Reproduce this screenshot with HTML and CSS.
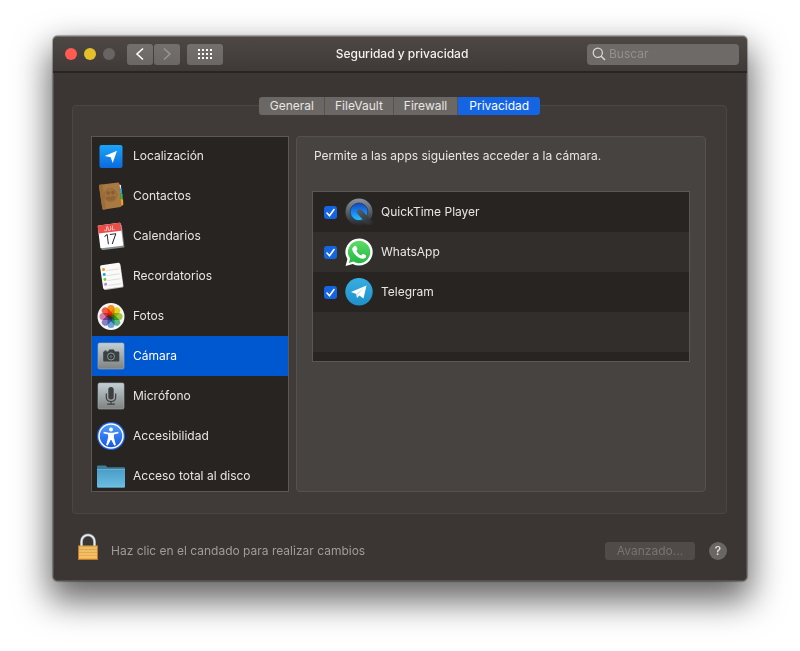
FILE: index.html
```
<!DOCTYPE html>
<html lang="es">
<head>
    <meta charset="UTF-8">
    <meta name="viewport" content="width=device-width, initial-scale=1">
    <title>Seguridad y privacidad</title>
    <link rel="stylesheet" href="styles.css">
</head>
<body>
    <main class="window">
        <header class="titlebar">
            <div class="toolbar">
                <div class="lights">
                    <button class="light close" aria-label="Cerrar"></button>
                    <button class="light minimize" aria-label="Minimizar"></button>
                    <button class="light" aria-label="Ampliar" disabled></button>
                </div>
                <div class="nav-buttons">
                    <button class="tool" aria-label="Atrás">
                        <svg width="10" height="14" viewBox="0 0 10 14"><path d="M8 1.500L2 7l6 5.500" fill="none" stroke="#fff" stroke-width="1.6"/></svg>
                    </button>
                    <button class="tool" aria-label="Adelante" disabled>
                        <svg width="10" height="14" viewBox="0 0 10 14"><path d="M2 1.500L8 7l-6 5.500" fill="none" stroke="#9b9794" stroke-width="1.4"/></svg>
                    </button>
                </div>
                <button class="tool wide" aria-label="Mostrar todo">
                    <svg width="14" height="10" viewBox="0 0 14 10"><path d="M0 1h14M0 5h14M0 9h14" stroke="#fff" stroke-width="2" stroke-dasharray="2"/></svg>
                </button>
            </div>
            <h1 class="title">Seguridad y privacidad</h1>
            <label class="search">
                <svg width="14" height="14" viewBox="0 0 14 14"><circle cx="5.8" cy="5.8" r="4.6" fill="none" stroke="#dddbda" stroke-width="1.2"/><path d="M9.2 9.2l3.8 3.8" stroke="#dddbda" stroke-width="1.4"/></svg>
                <input type="search" placeholder="Buscar" aria-label="Buscar">
            </label>
        </header>

        <div class="content">
            <div class="tabs" role="tablist">
                <button class="tab" role="tab">General</button>
                <button class="tab" role="tab">FileVault</button>
                <button class="tab" role="tab">Firewall</button>
                <button class="tab active" role="tab" aria-selected="true">Privacidad</button>
            </div>

            <section class="group">
                <nav class="sidebar">
                    <a class="item" href="#localizacion">
                        <svg class="icon" viewBox="0 0 28 28">
                            <defs><linearGradient id="loc" x2="0" y2="1"><stop offset="0" stop-color="#1ba4fb"/><stop offset="1" stop-color="#0b6bdd"/></linearGradient></defs>
                            <rect x="2.5" y="3" width="23" height="23" rx="2" fill="url(#loc)"/>
                            <path d="M20 8.700L15.700 21l-2-5.800-6-1.200z" fill="#fff"/>
                        </svg>
                        Localización
                    </a>
                    <a class="item" href="#contactos">
                        <svg class="icon" viewBox="0 0 28 28">
                            <path d="M22 2.500l2 .6.200 5-1.200.5z" fill="#e8e8e8"/>
                            <path d="M22.500 6l2.200.4.300 4.600-2 .5z" fill="#2ca7df"/>
                            <path d="M23 11l2.500.4.300 6-2.300.6z" fill="#35b45c"/>
                            <path d="M23.500 17l2.600.5.200 5.500-5 2z" fill="#f0a51c"/>
                            <path d="M2.800 2.800L21 .6q1 0 1.200 1l2.300 22.200q0 1-1 1.200L7 27.600q-1.400.2-1.700-1L2 4q0-1 .8-1.200z" fill="#a97943"/>
                            <path d="M2.800 2.800L5.500 2.500 8.800 27.300 7 27.600q-1.400.2-1.700-1L2 4q0-1 .8-1.200z" fill="#9c6d39"/>
                            <circle cx="13.500" cy="13" r="6.500" fill="#a27340" stroke="#8f6332" stroke-width=".7"/>
                            <circle cx="11.200" cy="11" r="2" fill="#8a5f30"/>
                            <circle cx="15.900" cy="10.500" r="2" fill="#8a5f30"/>
                            <path d="M8.500 16.500q2.500-4 5-.9 2-3.800 5.200 0-1.500 3-5 3-3.500.2-5.200-2.100z" fill="#8f6332"/>
                        </svg>
                        Contactos
                    </a>
                    <a class="item" href="#calendarios">
                        <svg class="icon" viewBox="0 0 28 28">
                            <g transform="rotate(-7 14 14)">
                                <rect x="3" y="4" width="23" height="23" rx="1" fill="#878f91"/>
                                <rect x="2" y="2" width="23" height="23" rx="1" fill="#fff"/>
                                <path d="M2 10V3q0-1 1-1h21q1 0 1 1v7z" fill="#eb4d49"/>
                                <text x="13.500" y="8.500" class="cal-month">JUL</text>
                                <text x="13.500" y="22" class="cal-day">17</text>
                            </g>
                        </svg>
                        Calendarios
                    </a>
                    <a class="item" href="#recordatorios">
                        <svg class="icon" viewBox="0 0 28 28">
                            <g transform="rotate(-8 14 14)">
                                <rect x="5" y="3" width="20" height="24" rx="1.500" fill="#bcbab7"/>
                                <rect x="4.500" y="2" width="20" height="24" rx="1.500" fill="#fbfaf8"/>
                                <path d="M10 8h13M10 13h13M10 18h13M10 23h13" stroke="#d5d3d1" stroke-width=".7"/>
                                <circle cx="7.500" cy="6.500" r="1.500" fill="#ff9021"/>
                                <circle cx="7.500" cy="11.500" r="1.500" fill="#1aa1f3"/>
                                <circle cx="7.500" cy="16.500" r="1.500" fill="#5fd638"/>
                                <circle cx="7.500" cy="21.500" r="1.500" fill="#c77ce4"/>
                            </g>
                        </svg>
                        Recordatorios
                    </a>
                    <a class="item" href="#fotos">
                        <svg class="icon" viewBox="0 0 28 28">
                            <circle cx="14" cy="14.500" r="13.500" fill="#f6f5f4"/>
                            <g class="petals">
                                <rect x="10.500" y="3" width="7" height="11.500" rx="3.500" fill="#ff9617"/>
                                <rect x="10.500" y="3" width="7" height="11.500" rx="3.500" fill="#eadc1e" transform="rotate(45 14 14.500)"/>
                                <rect x="10.500" y="3" width="7" height="11.500" rx="3.500" fill="#a5cf48" transform="rotate(90 14 14.500)"/>
                                <rect x="10.500" y="3" width="7" height="11.500" rx="3.500" fill="#5cc08c" transform="rotate(135 14 14.500)"/>
                                <rect x="10.500" y="3" width="7" height="11.500" rx="3.500" fill="#6cabe6" transform="rotate(180 14 14.500)"/>
                                <rect x="10.500" y="3" width="7" height="11.500" rx="3.500" fill="#9184c8" transform="rotate(225 14 14.500)"/>
                                <rect x="10.500" y="3" width="7" height="11.500" rx="3.500" fill="#d585b4" transform="rotate(270 14 14.500)"/>
                                <rect x="10.500" y="3" width="7" height="11.500" rx="3.500" fill="#f8604a" transform="rotate(315 14 14.500)"/>
                            </g>
                        </svg>
                        Fotos
                    </a>
                    <a class="item selected" href="#camara">
                        <svg class="icon" viewBox="0 0 28 28">
                            <defs><linearGradient id="metal" x2="0" y2="1"><stop offset="0" stop-color="#c2d0d5"/><stop offset="1" stop-color="#7e8180"/></linearGradient></defs>
                            <rect x="1" y="1" width="26" height="26" rx="1.500" fill="url(#metal)" stroke="#a5afb3" stroke-width=".6"/>
                            <path d="M7.500 8.500h2v1h1.500l1.300-2h4.400l1.300 2h3.500q.8 0 .8.800v8.400q0 .8-.8.800H7q-.8 0-.8-.8v-8.400q0-.8.8-.8h.5z" fill="#3b4143"/>
                            <circle cx="14" cy="14.500" r="3.500" fill="#33383a" stroke="#8c979b" stroke-width="1"/>
                            <circle cx="14" cy="14.500" r="1.500" fill="#5b6467"/>
                        </svg>
                        Cámara
                    </a>
                    <a class="item" href="#microfono">
                        <svg class="icon" viewBox="0 0 28 28">
                            <rect x="1" y="1" width="26" height="26" rx="1.500" fill="url(#metal)" stroke="#a5afb3" stroke-width=".6"/>
                            <rect x="11.300" y="5" width="5.400" height="12.500" rx="2.700" fill="#3d3f40"/>
                            <path d="M9.300 11.500V15q0 4.500 4.700 4.500t4.700-4.500v-3.500M14 19.500V22M10.200 22.200h7.600" fill="none" stroke="#3d3f40" stroke-width="1.200"/>
                        </svg>
                        Micrófono
                    </a>
                    <a class="item" href="#accesibilidad">
                        <svg class="icon" viewBox="0 0 28 28">
                            <defs><linearGradient id="acc" x2="0" y2="1"><stop offset="0" stop-color="#529ff8"/><stop offset="1" stop-color="#1454e5"/></linearGradient></defs>
                            <circle cx="14" cy="14" r="14" fill="#1e62e8"/>
                            <circle cx="14" cy="14" r="12" fill="url(#acc)" stroke="#fff" stroke-width="1.500"/>
                            <circle cx="14" cy="7.500" r="2" fill="#fff"/>
                            <path d="M6.700 9.800l5.300.9h4l5.300-.9.200 1.500-4.600 1.200v3l2 7.500-1.700.5L14.400 18h-.8l-2.800 5.500-1.700-.5 2-7.500v-3l-4.600-1.200z" fill="#fff"/>
                        </svg>
                        Accesibilidad
                    </a>
                    <a class="item" href="#disco">
                        <svg class="icon" viewBox="0 0 28 28">
                            <defs><linearGradient id="folder" x2="0" y2="1"><stop offset="0" stop-color="#4b9dc7"/><stop offset="1" stop-color="#69bee3"/></linearGradient></defs>
                            <path d="M0 6V4.500q0-1 1-1h7.500l2 1.800H27q1 0 1 1V10H0z" fill="#3c7f9d"/>
                            <path d="M0 7.500h28v17q0 1-1 1H1q-1 0-1-1z" fill="url(#folder)"/>
                            <path d="M0 7.500h28M.5 25h27" stroke="#83c7e4" stroke-width=".6"/>
                        </svg>
                        Acceso total al disco
                    </a>
                </nav>

                <div class="panel">
                    <p class="intro">Permite a las apps siguientes acceder a la cámara.</p>
                    <ul class="apps">
                        <li>
                            <label class="app">
                                <input type="checkbox" checked>
                                <svg class="icon" viewBox="0 0 28 28">
                                    <defs>
                                        <linearGradient id="qt-ring" x2="0" y2="1"><stop offset="0" stop-color="#8993a0"/><stop offset="1" stop-color="#25282c"/></linearGradient>
                                        <linearGradient id="qt-lens" x2="0" y2="1"><stop offset="0" stop-color="#1547bd"/><stop offset=".5" stop-color="#1683f3"/><stop offset="1" stop-color="#23c5fc"/></linearGradient>
                                        <linearGradient id="qt-tail" x2="1" y2="1"><stop offset="0" stop-color="#596067"/><stop offset="1" stop-color="#25282b"/></linearGradient>
                                    </defs>
                                    <circle cx="14" cy="14" r="13.500" fill="url(#qt-ring)"/>
                                    <circle cx="14" cy="13.800" r="8.800" fill="url(#qt-lens)" stroke="#273a59" stroke-width=".8"/>
                                    <path d="M12 15q-1-2.500 1.500-3.500 2-.5 3.500.8L28 24.500 27.500 27l-5.500-.3z" fill="url(#qt-tail)"/>
                                </svg>
                                QuickTime Player
                            </label>
                        </li>
                        <li>
                            <label class="app">
                                <input type="checkbox" checked>
                                <svg class="icon" viewBox="0 0 28 28">
                                    <defs><linearGradient id="wa" x2="0" y2="1"><stop offset="0" stop-color="#5fdb67"/><stop offset="1" stop-color="#23b844"/></linearGradient></defs>
                                    <path d="M14 .5a13.500 13.500 0 1 1-6.200 25.400L.6 27.900l1.800-7A13.500 13.500 0 0 1 14 .5z" fill="#fff"/>
                                    <path d="M14 2.800a11.200 11.200 0 1 1-5.700 20.800l-4.400 1.300 1.300-4.300A11.200 11.200 0 0 1 14 2.800z" fill="url(#wa)"/>
                                    <path d="M9.300 8.200q.8-.8 1.700-.1l1.500 3q0 .7-1.200 2 1.500 3 4.800 4.400l1.700-1.600q.5-.3 3.300 1.500.4 3-3.400 3.400-3.500-.2-7.400-4-3.700-4-3-6.400.6-1.500 2-2.200z" fill="#fff"/>
                                </svg>
                                WhatsApp
                            </label>
                        </li>
                        <li>
                            <label class="app">
                                <input type="checkbox" checked>
                                <svg class="icon" viewBox="0 0 28 28">
                                    <defs><linearGradient id="tg" x2="0" y2="1"><stop offset="0" stop-color="#37aee2"/><stop offset="1" stop-color="#1e90ca"/></linearGradient></defs>
                                    <circle cx="14" cy="13.800" r="13.700" fill="url(#tg)"/>
                                    <path d="M6 14L21.500 7.500 18.500 20.500 14.400 17.500 12 20 11.300 16z" fill="#fff"/>
                                    <path d="M11.300 16l8-6.600-6.800 7.400-.5 3.200z" fill="#c3dbea"/>
                                </svg>
                                Telegram
                            </label>
                        </li>
                    </ul>
                </div>
            </section>

            <footer class="footer">
                <button class="lock">
                    <svg width="20" height="27" viewBox="0 0 20 27">
                        <defs><linearGradient id="brass" x2="0" y2="1"><stop offset="0" stop-color="#d8a34b"/><stop offset="1" stop-color="#efb04c"/></linearGradient></defs>
                        <path d="M3.500 14V8.500a6.500 6.500 0 0 1 13 0V14" fill="none" stroke="#8d9295" stroke-width="3"/>
                        <path d="M3.500 14V8.500a6.500 6.500 0 0 1 13 0V14" fill="none" stroke="#e8edef" stroke-width="1.600"/>
                        <rect y="12.500" width="20" height="14.500" rx=".8" fill="url(#brass)"/>
                        <path d="M1 15h18M1 18h18M1 21h18M1 24h18" stroke="#ffd482"/>
                        <path d="M.5 12.500v14h19v-14" fill="none" stroke="#bd792b"/>
                    </svg>
                    <span>Haz clic en el candado para realizar cambios</span>
                </button>
                <button class="advanced" disabled>Avanzado...</button>
                <button class="help" aria-label="Ayuda">?</button>
            </footer>
        </div>
    </main>
</body>
</html>
```
FILE: styles.css
```
:root {
    --text-color: #e8e6e5;
    --window-color: #3b3633;
    --control-color: #6b6764;
    --list-color: #282422;
    --accent-color: #1465e3;
}

* {
    box-sizing: border-box;
}

body {
    margin: 0;
    padding: 36px 53px 70px;
    background-color: #fff;
    color: var(--text-color);
    font-family: Inter, "Liberation Sans", sans-serif;
    font-size: 12px;
    line-height: 16px;
}

button,
input {
    font: inherit;
    color: inherit;
}

button {
    padding: 0;
    border: none;
}

.window {
    border-radius: 5px;
    background-color: var(--window-color);
    box-shadow: inset 0 0 0 1px #55504d, 0 0 1px 1px rgba(0, 0, 0, 0.3), 0 16px 34px 4px rgba(0, 0, 0, 0.6);
}

.titlebar {
    display: grid;
    grid-template-columns: 1fr auto 1fr;
    align-items: center;
    height: 37px;
    padding: 0 8px 0 12px;
    border-top: 1px solid #75706d;
    border-bottom: 2px solid #292523;
    border-radius: 5px 5px 0 0;
    background: linear-gradient(#4e4845, #3f3a37);
}

.toolbar,
.lights,
.nav-buttons {
    display: flex;
    align-items: center;
}

.lights {
    gap: 7px;
    margin-right: 12px;
}

.light {
    width: 12px;
    height: 12px;
    border-radius: 50%;
    background-color: #686461;
}

.light.close {
    background-color: #ff5b52;
}

.light.minimize {
    background-color: #e6c029;
}

.nav-buttons {
    gap: 1px;
    margin-right: 7px;
}

.tool {
    display: flex;
    align-items: center;
    justify-content: center;
    width: 26px;
    height: 21px;
    border-radius: 3px;
    background: linear-gradient(#73706d, #6b6764);
}

.tool.wide {
    width: 36px;
}

.title {
    margin: 0;
    font-size: 12px;
    font-weight: 500;
    color: #f2f1f0;
}

.search {
    display: flex;
    align-items: center;
    justify-self: end;
    gap: 3px;
    width: 152px;
    height: 21px;
    padding: 0 5px;
    border-radius: 4px;
    background-color: #6e6a67;
}

.search input {
    flex: 1;
    min-width: 0;
    padding: 0;
    border: none;
    outline: none;
    background: none;
}

.search input::placeholder {
    color: #94908d;
}

.content {
    padding: 24px 20px 21px 19px;
}

.tabs {
    display: flex;
    justify-content: center;
    position: relative;
    margin-bottom: -10px;
}

.tab {
    height: 18px;
    padding: 0 10px;
    border-right: 1px solid #56524f;
    background-color: var(--control-color);
}

.tab:first-child {
    padding-left: 11px;
    border-radius: 3px 0 0 3px;
}

.tab.active {
    padding: 0 11px;
    border: none;
    border-radius: 0 3px 3px 0;
    background-color: var(--accent-color);
    color: #fff;
}

.group {
    display: flex;
    gap: 7px;
    padding: 30px 20px 21px 18px;
    border: 1px solid #4b4643;
    border-radius: 4px;
    background-color: #403b38;
}

.sidebar {
    flex: 0 0 198px;
    height: 356px;
    overflow: hidden;
    outline: 1px solid #5b5754;
    outline-offset: -1px;
    background-color: var(--list-color);
}

.item {
    display: flex;
    align-items: center;
    gap: 8px;
    height: 40px;
    padding: 0 6px;
    color: inherit;
    text-decoration: none;
}

.item.selected {
    background-color: #0058d0;
    color: #fff;
}

.icon {
    flex: none;
    width: 28px;
    height: 28px;
}

.cal-month {
    font-size: 6px;
    fill: #fff;
    text-anchor: middle;
}

.cal-day {
    font-size: 14px;
    font-weight: 300;
    fill: #242424;
    text-anchor: middle;
}

.petals rect {
    mix-blend-mode: multiply;
}

.panel {
    flex: 1;
    padding: 11px 15px;
    border: 1px solid #55514e;
    border-radius: 4px;
    background-color: #474340;
}

.intro {
    margin: 0 0 27px 2px;
}

.apps {
    height: 171px;
    margin: 0;
    padding: 0;
    overflow: hidden;
    list-style: none;
    border: 1px solid #5b5754;
    background: repeating-linear-gradient(var(--list-color) 0 40px, #322e2b 40px 80px);
}

.app {
    display: flex;
    align-items: center;
    gap: 8px;
    height: 40px;
    padding: 0 11px;
}

.app input {
    appearance: none;
    width: 13px;
    height: 13px;
    margin: 1px 0 0;
    border-radius: 3px;
    background: var(--accent-color) url("data:image/svg+xml,%3Csvg xmlns='http://www.w3.org/2000/svg' viewBox='0 0 13 13'%3E%3Cpath d='M3 7l2.500 2.800L10 3.500' fill='none' stroke='white' stroke-width='1.600' stroke-linecap='round'/%3E%3C/svg%3E");
}

.footer {
    display: flex;
    align-items: flex-end;
    padding-top: 19px;
}

.lock {
    display: flex;
    align-items: center;
    gap: 13px;
    margin-right: auto;
    padding-left: 6px;
    background: none;
    color: #9f9c9a;
}

.lock span {
    padding-top: 8px;
}

.advanced {
    width: 90px;
    height: 18px;
    border-radius: 3px;
    background-color: #504b48;
    color: #777370;
}

.help {
    width: 18px;
    height: 18px;
    margin-left: 14px;
    border-radius: 50%;
    background-color: #6a6663;
    font-weight: 500;
}
```
